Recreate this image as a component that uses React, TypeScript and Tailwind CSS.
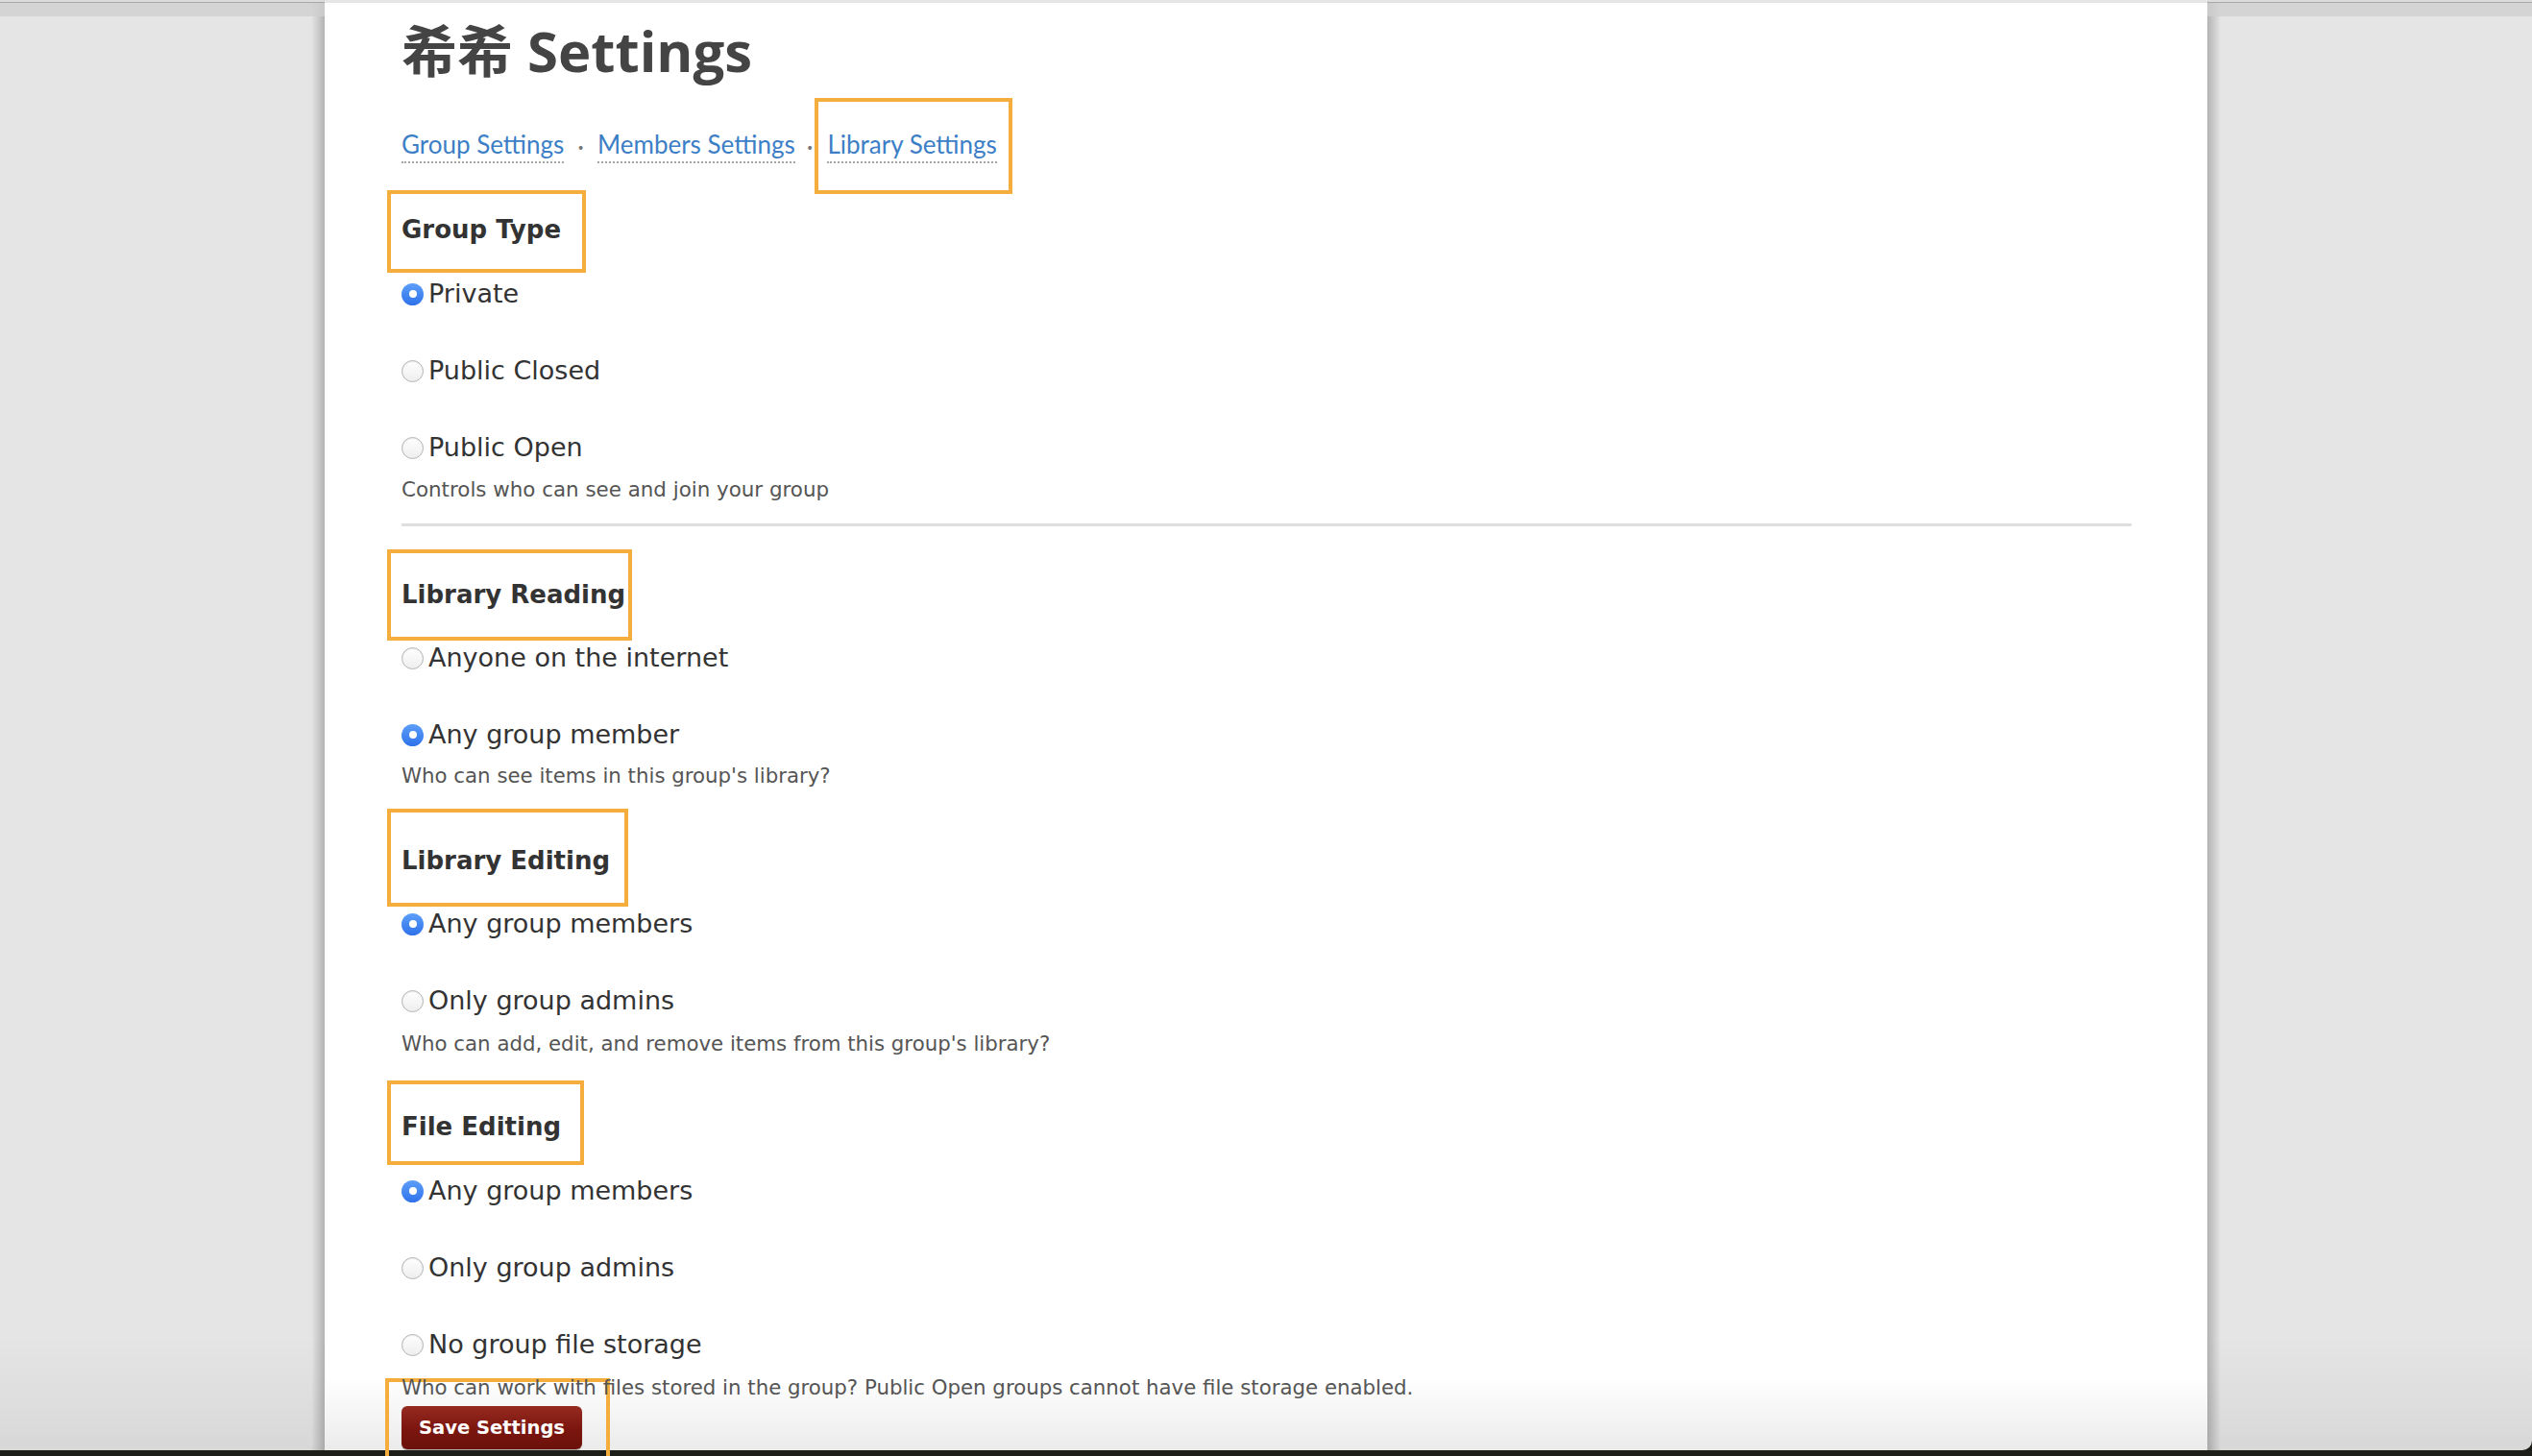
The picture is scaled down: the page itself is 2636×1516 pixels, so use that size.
import React from 'react';
import clsx from 'clsx';

interface OptionItem {
  label: string;
  checked?: boolean;
}

interface SettingSection {
  title: string;
  boxClass: string;
  rowsClass: string;
  descClass: string;
  options: OptionItem[];
  description: string;
}

const sections: SettingSection[] = [
  {
    title: 'Library Reading',
    boxClass: 'mt-[24px] h-[95px] w-[255px]',
    rowsClass: '-mt-[4px]',
    descClass: 'mt-[9px]',
    options: [{ label: 'Anyone on the internet' }, { label: 'Any group member', checked: true }],
    description: "Who can see items in this group's library?",
  },
  {
    title: 'Library Editing',
    boxClass: 'mt-[22px] h-[102px] w-[251px] pt-[6px]',
    rowsClass: '-mt-[4px]',
    descClass: 'mt-[11px]',
    options: [{ label: 'Any group members', checked: true }, { label: 'Only group admins' }],
    description: "Who can add, edit, and remove items from this group's library?",
  },
  {
    title: 'File Editing',
    boxClass: 'mt-[26px] h-[88px] w-[205px] pt-[8px]',
    rowsClass: 'mt-[5px]',
    descClass: 'mt-[11px]',
    options: [
      { label: 'Any group members', checked: true },
      { label: 'Only group admins' },
      { label: 'No group file storage' },
    ],
    description: 'Who can work with files stored in the group? Public Open groups cannot have file storage enabled.',
  },
];

// orange annotation frame drawn round a heading
const Marked: React.FC<{ className?: string; children: React.ReactNode }> = ({ className, children }) => (
  <div
    className={clsx(
      '-ml-[15px] flex items-center whitespace-nowrap border-[4px] border-[#f5ae3d] pl-[11px]',
      className
    )}
  >
    {children}
  </div>
);

const Radio: React.FC<{ checked?: boolean }> = ({ checked }) =>
  checked ? (
    <span className="flex h-[23px] w-[23px] shrink-0 items-center justify-center rounded-full bg-gradient-to-b from-[#5d9ef9] to-[#2f72ea]">
      <span className="h-[8px] w-[8px] rounded-full bg-white" />
    </span>
  ) : (
    <span className="h-[23px] w-[23px] shrink-0 rounded-full border border-[#b3b3b3] bg-gradient-to-b from-white to-[#eeeeee] shadow-[inset_0_1px_1px_rgba(0,0,0,0.08)]" />
  );

const OptionList: React.FC<{ options: OptionItem[]; className?: string }> = ({ options, className }) => (
  <div className={clsx('flex flex-col gap-[36px]', className)}>
    {options.map((o) => (
      <label key={o.label} className="flex h-[44px] shrink-0 items-center gap-[5px] text-[27px] text-[#333]">
        <Radio checked={o.checked} />
        <span>{o.label}</span>
      </label>
    ))}
  </div>
);

const Heading: React.FC<{ children: React.ReactNode }> = ({ children }) => (
  <h3 className="text-[26px] font-bold text-[#333]">{children}</h3>
);

const Gutter: React.FC<{ side: 'left' | 'right' }> = ({ side }) => (
  <div
    className={clsx(
      'flex flex-col bg-[#e5e5e5]',
      side === 'left'
        ? 'w-[338px] shrink-0 bg-[linear-gradient(to_left,rgba(0,0,0,0.22),rgba(0,0,0,0)_14px)]'
        : 'flex-1 rounded-br-[10px] bg-[linear-gradient(to_right,rgba(0,0,0,0.22),rgba(0,0,0,0)_14px)]'
    )}
  >
    <div className="h-[2px] bg-[#dcdcdc]" />
    <div className="h-[15px] border-t border-[#a8a8a8] bg-[#cfcfcf]/80" />
    <div className="flex-1 bg-[linear-gradient(to_bottom,rgba(0,0,0,0)_92%,rgba(0,0,0,0.06))]" />
  </div>
);

const App: React.FC = () => {
  return (
    <div className="h-[1516px] w-full overflow-hidden bg-[#1d1e19] font-['DejaVu_Sans',sans-serif]">
      <div className="flex h-[1510px]">
        <Gutter side="left" />

        <main className="w-[1960px] shrink-0 border-t-[3px] border-[#e6e6e6] bg-[linear-gradient(to_bottom,#ffffff_95%,#ebebeb)] pl-[80px] pr-[79px]">
          <div className="flex h-[99px] items-center">
            <h1 className="font-['Open_Sans','Noto_Sans_CJK_SC',sans-serif] text-[58px] font-bold leading-none text-[#444]">
              希希 Settings
            </h1>
          </div>

          {/* tabs */}
          <nav className="flex h-[100px] items-center font-['Lato',sans-serif] text-[26px] text-[#3d7fc6]">
            <a className="border-b-2 border-dotted border-[#a5a5a5] pb-[3px] leading-[30px]">Group Settings</a>
            <span className="mx-[14px] text-[#777]">·</span>
            <a className="border-b-2 border-dotted border-[#a5a5a5] pb-[3px] leading-[30px]">Members Settings</a>
            <span className="ml-[12px] text-[#777]">·</span>
            <div className="ml-[2px] flex h-[100px] w-[206px] items-center border-[4px] border-[#f5ae3d] pl-[9px]">
              <a className="border-b-2 border-dotted border-[#a5a5a5] pb-[3px] leading-[30px]">Library Settings</a>
            </div>
          </nav>

          <Marked className="-mt-[4px] h-[86px] w-[207px] pb-[4px]">
            <Heading>Group Type</Heading>
          </Marked>
          <OptionList
            options={[{ label: 'Private', checked: true }, { label: 'Public Closed' }, { label: 'Public Open' }]}
          />
          <p className="mt-[10px] text-[21.4px] leading-[24px] text-[#555]">Controls who can see and join your group</p>

          <hr className="mt-[23px] h-[3px] border-0 bg-[#dedede]" />

          {sections.map((s) => (
            <React.Fragment key={s.title}>
              <Marked className={s.boxClass}>
                <Heading>{s.title}</Heading>
              </Marked>
              <OptionList options={s.options} className={s.rowsClass} />
              <p className={clsx('text-[21.3px] leading-[24px] text-[#555]', s.descClass)}>{s.description}</p>
            </React.Fragment>
          ))}

          <div className="-ml-[17px] -mt-[22px] h-[120px] w-[234px] border-[4px] border-[#f5ae3d] pl-[13px] pt-[25px]">
            <button className="h-[45px] w-[188px] rounded-[6px] bg-gradient-to-b from-[#962a20] via-[#7d170f] to-[#6a110b] text-[19.5px] font-bold text-white shadow-[0_1px_1px_rgba(0,0,0,0.3)]">
              Save Settings
            </button>
          </div>
        </main>

        <Gutter side="right" />
      </div>
    </div>
  );
};

export default App;
